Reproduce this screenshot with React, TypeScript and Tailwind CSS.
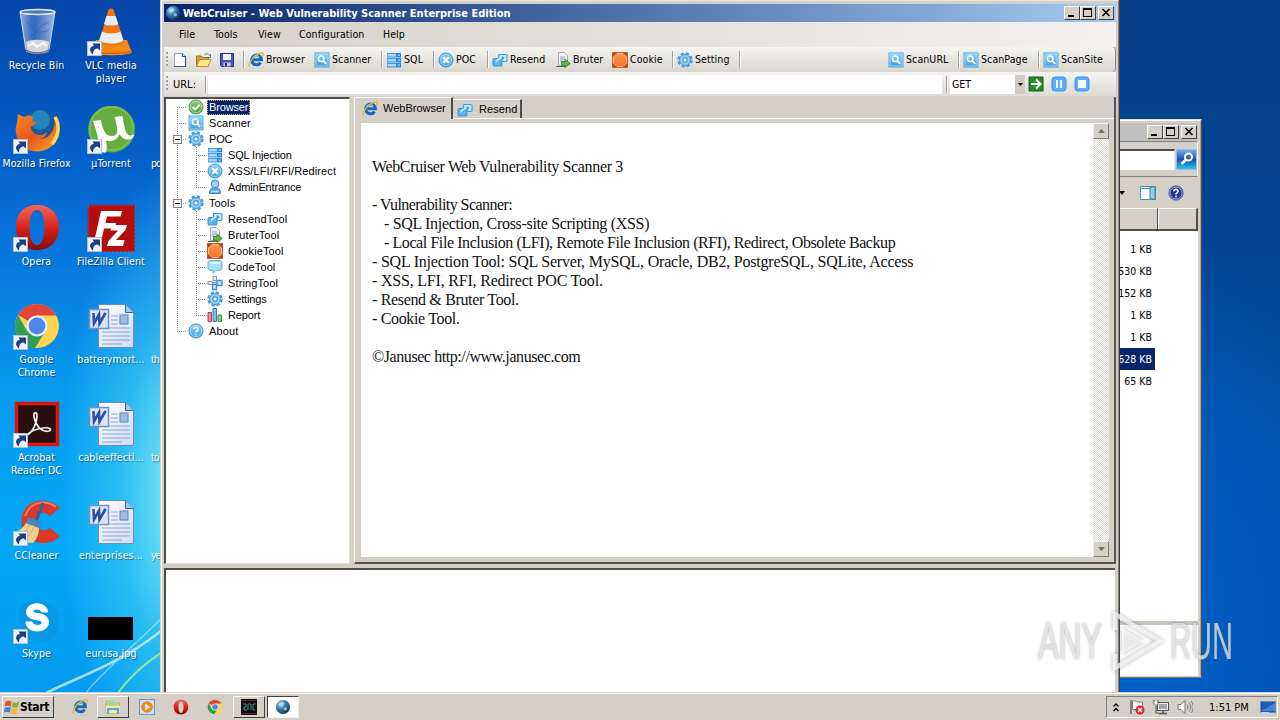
import React from 'react';
import type { ReactNode } from 'react';
import clsx from 'clsx';

/* ---------- shared gradients ---------- */

const Defs = () => (
  <svg className="absolute w-0 h-0" aria-hidden>
    <defs>
      <linearGradient id="blue" x1="0" y1="0" x2="0" y2="1"><stop offset="0" stopColor="#8fd4f7" /><stop offset="1" stopColor="#3d9be0" /></linearGradient>
      <linearGradient id="orange" x1="0" y1="0" x2="0" y2="1"><stop offset="0" stopColor="#ff9a4d" /><stop offset="1" stopColor="#f4702c" /></linearGradient>
      <linearGradient id="red" x1="0" y1="0" x2="0" y2="1"><stop offset="0" stopColor="#f4685a" /><stop offset="0.5" stopColor="#d8231c" /><stop offset="1" stopColor="#8e0806" /></linearGradient>
      <linearGradient id="green" x1="0" y1="0" x2="0" y2="1"><stop offset="0" stopColor="#8fd080" /><stop offset="1" stopColor="#3f9a3c" /></linearGradient>
      <linearGradient id="glass" x1="0" y1="0" x2="1" y2="0"><stop offset="0" stopColor="#b9cbe8" stopOpacity="0.8" /><stop offset="0.4" stopColor="#5d84cb" stopOpacity="0.5" /><stop offset="1" stopColor="#c5d3ec" stopOpacity="0.85" /></linearGradient>
      <linearGradient id="page" x1="0" y1="0" x2="1" y2="1"><stop offset="0" stopColor="#ffffff" /><stop offset="1" stopColor="#cddcf7" /></linearGradient>
      <linearGradient id="fire" x1="0" y1="0" x2="1" y2="1"><stop offset="0" stopColor="#f58a2a" /><stop offset="0.5" stopColor="#e8531c" /><stop offset="1" stopColor="#f7b52b" /></linearGradient>
      <radialGradient id="globe" cx="0.35" cy="0.3" r="0.8"><stop offset="0" stopColor="#b6e0f5" /><stop offset="0.4" stopColor="#3f83b8" /><stop offset="1" stopColor="#0b2746" /></radialGradient>
    </defs>
  </svg>
);

type IconProps = { className?: string };

const Svg = ({ box = 16, className = 'w-4 h-4', children }: { box?: number; className?: string; children: ReactNode }) => (
  <svg viewBox={`0 0 ${box} ${box}`} className={clsx('shrink-0', className)} fill="none">{children}</svg>
);

/* ---------- small 16px icons ---------- */

const IeIcon = ({ className }: IconProps) => (
  <Svg className={className}>
    <path d="M12.600 10.600a4.900 4.900 0 1 1 .8-2.900H4.600" stroke="#1668bf" strokeWidth="3" />
    <path d="M4.500 5.600a4.500 4.500 0 0 1 6.600-.9" stroke="#5fc4f6" strokeWidth="1.400" />
    <path d="M2 13.800C-.6 14 3 6 9 2.600c3.400-1.900 6-2.400 6.200-.9.1.8-.3 1.700-.9 2.600" stroke="#eab52d" strokeWidth="1.400" />
  </Svg>
);

const SearchIcon = ({ className }: IconProps) => (
  <Svg className={className}>
    <rect x="1" y="1" width="14" height="14" fill="url(#blue)" stroke="#4ba3da" />
    <rect x="2" y="2" width="12" height="12" stroke="#c0e8fb" strokeWidth=".7" />
    <circle cx="7.200" cy="6.800" r="2.800" stroke="#fff" strokeWidth="1.400" />
    <path d="m9.400 9 2.800 2.800" stroke="#fff" strokeWidth="1.800" />
  </Svg>
);

const ServerIcon = ({ className }: IconProps) => (
  <Svg className={className}>
    {[1, 6, 11].map((y) => (
      <g key={y}>
        <rect x="1" y={y} width="14" height="4.400" fill="#2488e2" />
        <rect x="1.500" y={y + 0.8} width="8.500" height="2.700" fill="#a9d8f8" />
        <path d={`M11.500 ${y + 2.200}h2.500`} stroke="#7cc0f5" strokeWidth="1.600" />
      </g>
    ))}
  </Svg>
);

const CrossIcon = ({ className }: IconProps) => (
  <Svg className={className}>
    <circle cx="8" cy="8" r="7" fill="url(#blue)" stroke="#3f93d4" />
    <circle cx="8" cy="8" r="5.600" stroke="#a9dcf8" strokeWidth=".8" />
    <path d="m5.300 5.300 5.400 5.400m0-5.400-5.400 5.400" stroke="#fff" strokeWidth="2.200" />
  </Svg>
);

const GearIcon = ({ className }: IconProps) => (
  <Svg className={className}>
    <circle cx="8" cy="8" r="6.500" stroke="#4a9cdb" strokeWidth="2.400" strokeDasharray="3.300 1.800" />
    <circle cx="8" cy="8" r="5.500" fill="#6db8ec" stroke="#4a9cdb" />
    <circle cx="8" cy="8" r="4" stroke="#a9dbf8" strokeWidth="1.200" />
    <circle cx="8" cy="8" r="2.200" fill="#f8fdff" stroke="#3387cc" />
  </Svg>
);

const ResendIcon = ({ className }: IconProps) => (
  <Svg className={className}>
    <rect x="6.500" y="2.500" width="8.500" height="7" rx="1" fill="#c4e7fb" stroke="#3f9fe0" strokeWidth="1.200" />
    <rect x="1" y="6.500" width="9" height="7.500" rx="1" fill="#5db1ec" stroke="#3493da" />
    <path d="M4 10.500c.5-3 3-4 6-4.500" stroke="#d6effc" strokeWidth="1.400" />
    <path d="m9.500 4 3 1.800-2.500 2.700z" fill="#3493da" />
  </Svg>
);

const BruterIcon = ({ className }: IconProps) => (
  <Svg className={className}>
    <path d="M3.500.5h6l3 3v10h-9z" fill="#eef2f8" stroke="#9aa6ba" />
    <path d="M5 5h5M5 7h5M5 9h3" stroke="#8d9cc4" />
    <path d="M1 14.500h9" stroke="#55606a" />
    <path d="M6.500 9.500H10V7.300l5.300 4.200-5.300 4v-2.200H6.500z" fill="#5fb548" stroke="#2f7a25" strokeWidth=".8" />
  </Svg>
);

const CookieIcon = ({ className }: IconProps) => (
  <Svg className={className}>
    <rect x=".5" y=".5" width="15" height="15" fill="#a9481c" stroke="#c65f2d" />
    <path d="m5 1.500 6 0 3.500 3.500v6L11 14.500H5L1.500 11V5z" fill="url(#orange)" stroke="#ffb57c" />
  </Svg>
);

const OkIcon = ({ className }: IconProps) => (
  <Svg className={className}>
    <circle cx="8" cy="8" r="7" fill="url(#green)" stroke="#4f9d48" />
    <circle cx="8" cy="8" r="5.700" stroke="#bfe4b5" strokeWidth=".8" />
    <path d="m4.500 8 2.500 2.500 4.700-4.700" stroke="#fff" strokeWidth="2" />
  </Svg>
);

const UserIcon = ({ className }: IconProps) => (
  <Svg className={className}>
    <path d="M2.500 14.500c0-4 2-6 5.500-6s5.500 2 5.500 6z" fill="#5aaeea" stroke="#2f86cc" />
    <path d="M4.500 12.500h7" stroke="#b7e0fa" strokeWidth="1.500" />
    <circle cx="8" cy="5" r="3.900" fill="#9bd3f6" stroke="#2f86cc" />
  </Svg>
);

const ChatIcon = ({ className }: IconProps) => (
  <Svg className={className}>
    <path d="M3 1.500h10c1.200 0 2 .7 2 2v5.800c0 1.200-.8 2-2 2H9l-3 3v-3H3c-1.200 0-2-.8-2-2V3.500c0-1.300.8-2 2-2z" fill="#a8def6" stroke="#5fb2dc" />
    <path d="M3 4h10" stroke="#dcf4fd" strokeWidth="2" />
  </Svg>
);

const StringIcon = ({ className }: IconProps) => (
  <Svg className={className}>
    <path d="M6 1.500h3.500v4H6zM1 6.500h4.500v3H1z" fill="#e8ebee" stroke="#8a939b" />
    <path d="M5.500 9.500h4v5h-4zM10 5.500h5v5h-5z" fill="#c4e6fa" stroke="#3493d4" strokeWidth="1.300" />
    <path d="M6 7.500h4" stroke="#8a939b" strokeWidth="1.500" />
  </Svg>
);

const ReportIcon = ({ className }: IconProps) => (
  <Svg className={className}>
    <path d="M1 5.500h3.500v9H1z" fill="#ee8191" stroke="#c73e52" />
    <path d="M6 1.500h3.500v13H6z" fill="#79bff0" stroke="#2d7cbc" />
    <path d="M11 8h3.500v6.500H11z" fill="#90cf7a" stroke="#458a36" />
  </Svg>
);

const AboutIcon = ({ className }: IconProps) => (
  <Svg className={className}>
    <circle cx="8" cy="8" r="7" fill="url(#blue)" stroke="#3f93d4" />
    <circle cx="8" cy="8" r="5.700" stroke="#b2e0f9" strokeWidth=".8" />
    <path d="M5.800 6.300C6 3.600 10.200 3.800 10.100 6.200 10 7.600 8 7.700 8 9.500M8 10.700v1.600" stroke="#fff" strokeWidth="1.500" />
  </Svg>
);

const NewIcon = () => (
  <Svg>
    <path d="M2.500 1.500h8l3 3v10h-11z" fill="#fff" stroke="#8ca6d8" />
    <path d="M10.500 1.500v3h3v10h-11" stroke="#2d56a5" strokeWidth="1.200" />
  </Svg>
);

const OpenIcon = () => (
  <Svg className="w-[17px] h-4">
    <path d="M1 14V4h5l1 1.500h6V14z" fill="#d59f2d" stroke="#a87717" />
    <path d="m1 14.500 3-7h11.500l-3 7z" fill="#ffe28c" stroke="#c2912a" />
    <path d="M9 3c2-2 4-1.500 5 .5l1-1v3h-3" stroke="#4c6fa8" />
  </Svg>
);

const SaveIcon = () => (
  <Svg>
    <path d="M1.500 1.500h13v13h-12l-1-1z" fill="#4c55c4" stroke="#262d86" />
    <path d="M4 2h8v6H4z" fill="#f2f4fb" />
    <path d="M4.500 10.500h7v4h-7z" fill="#c8cde0" />
    <path d="M6 11h2v3.500H6z" fill="#262d86" />
  </Svg>
);

const OperaIcon = ({ className }: IconProps) => (
  <Svg className={className}>
    <path fillRule="evenodd" d="M8 .5c4.300 0 7.300 3.100 7.300 7.500s-3 7.500-7.300 7.500S.7 12.400.7 8 3.700.5 8 .5zm0 1.700C6.300 2.200 5.500 4.600 5.500 8s.8 5.900 2.500 5.900 2.500-2.500 2.500-5.900S9.700 2.200 8 2.200z" fill="url(#red)" />
  </Svg>
);

const ChromeIcon = ({ className }: IconProps) => (
  <Svg className={className}>
    <circle cx="8" cy="8" r="7.300" fill="#ffd54f" />
    <path d="M8 8 1.700 4.300A7.300 7.300 0 0 1 14.400 4.500H8z" fill="#e0453a" />
    <path d="M8 8 4.800 9.900 1.700 4.300A7.300 7.300 0 0 0 7.300 15.300L11 9.500z" fill="#2f9e55" />
    <circle cx="8" cy="8" r="3.500" fill="#eef2f6" />
    <circle cx="8" cy="8" r="2.800" fill="#4f86ec" />
  </Svg>
);

const GlobeIcon = ({ className }: IconProps) => (
  <Svg className={className}>
    <circle cx="8" cy="8" r="7" fill="url(#globe)" />
    <path d="M4 5c2-2 4-2 5-1s-1 2-2 3-3 0-3-2zM9 9c2-1 3 0 3 1s-2 2-3 1z" fill="#d7effa" opacity=".6" />
  </Svg>
);

/* ---------- desktop icons (48px box) ---------- */

const ShortcutArrow = () => (
  <g>
    <rect x=".5" y="33.500" width="14" height="14" fill="#eef3f9" stroke="#b4bfcd" />
    <path d="M6 46.500C1.500 43 2.500 38.500 7 38L5.500 35.500h7.500v7l-2.200-2c-3 0-4.800 2-4.800 6z" fill="#1d4085" />
  </g>
);

const BinIcon = () => (
  <Svg box={48} className="w-12 h-12">
    <path d="m7 4 5 36c6 5 18 5 24 0l6-36z" fill="url(#glass)" />
    <path d="M13 34c4-3 18-3 23 0l-1 8c-6 3-15 3-21 0z" fill="#d5d8db" />
    <path d="m15 38 5-3 4 4 6-4 4 3" stroke="#f5f5f5" strokeWidth="2" />
    <path d="m7 4 6 38M42 4l-6 38" stroke="#c7d6ee" />
    <path d="M14 14c7 8 12 13 22 8M17 30c6-6 8-12 19-16" stroke="#2e5caf" opacity=".6" />
    <ellipse cx="24.500" cy="4" rx="17.500" ry="2.500" fill="#4f78c0" stroke="#e4ecf7" strokeWidth="1.300" />
    <path d="M13 43c6 3 17 3 23 0" stroke="#9c8b7e" strokeWidth="1.600" />
  </Svg>
);

const VlcIcon = () => (
  <Svg box={48} className="w-12 h-12">
    <path d="M9 32h31l5 13c-8 3-34 3-42 0z" fill="#f58a17" />
    <path d="M3 43c9 2 33 2 42 0v1.500c-9 2-33 2-42 0z" fill="#cf6608" />
    <path d="M21.500 1.500c1-1.500 4-1.500 5 0L37 34c-3 5-22 5-25 0z" fill="#ef7611" />
    <path d="M19.500 8h9l2.800 8c-3 2-11 2-14.300 0zM15 23.500c4 2.500 14.500 2.500 18.500 0l3 9c-4 4-20 4-24.500 0z" fill="#eceeee" />
    <ShortcutArrow />
  </Svg>
);

const FirefoxIcon = () => (
  <Svg box={48} className="w-12 h-12">
    <circle cx="26" cy="23" r="20" fill="#15599f" />
    <circle cx="27" cy="14" r="10" fill="#2c9cd0" opacity=".65" />
    <path d="M41 9c7 8 7 22-1 30-8 8-22 9-30 1C3 34 1 23 4 17l1-9 6 3c3-2 6-2 9 0l-1 4 5 2-6 4c0 7 9 11 16 5-1 5-5 7-9 7 13 1 19-12 16-24z" fill="url(#fire)" />
    <path d="M42 11c5 8 4 19-3 27" stroke="#ffd94f" strokeWidth="3.500" />
    <ShortcutArrow />
  </Svg>
);

const TorrentIcon = () => (
  <Svg box={48} className="w-12 h-12">
    <circle cx="24.500" cy="23" r="23.500" fill="#66ad3f" />
    <circle cx="24.500" cy="22.500" r="21.500" stroke="#7fc05a" strokeWidth="1.500" />
    <path d="m6 15 8-1c1.500 10 5 17 12 16 6-1 5-7 1.500-19l8-1c2 12 3 17 6 19 2 1 4 .5 6-.5-.5 3-3 5-7 5-3.500 0-6-2-8-5-3 6-8 8-13.500 6 1 5 1 8 0 12-3 0-6-.500-7.500-1C13 34 9 25 6 15z" fill="#fff" />
    <ShortcutArrow />
  </Svg>
);

const FileZillaIcon = () => (
  <Svg box={48} className="w-12 h-12">
    <rect x="2" y="2" width="45" height="45" fill="#b50c0c" stroke="#c40f0f" strokeWidth="3" strokeDasharray="2.500 1.500" />
    <path d="M14 7h21l-1.500 5.500H20L18.500 19H29l-1.500 5.500H17L14 38H7z" fill="#fff" />
    <path d="M25 21h15l-1.500 5L29 36h8.500L36 42H20l1.500-5L31 26.500h-7.500z" fill="#fff" />
    <ShortcutArrow />
  </Svg>
);

const DocIcon = () => (
  <Svg box={48} className="w-12 h-12">
    <path d="M11.500 2.500h27l8 8v35h-35z" fill="url(#page)" stroke="#6b8bc4" />
    <path d="M38.500 2.500v8h8" fill="#a9c0e8" stroke="#3d5f9d" />
    <path d="M24 14h7M24 18h7M24 22h7M15 26h28M15 30h28M15 34h28M15 38h28M15 42h20" stroke="#8ba2cf" strokeWidth="1" />
    <rect x="33" y="13" width="8" height="9" fill="#9ebbe6" stroke="#5f83bf" />
    <rect x="2.500" y="7.500" width="19" height="19" fill="#dbe6fa" stroke="#6f91cc" strokeWidth="1.500" />
    <path d="m6.500 11 .5 10.500 5-9 .5 9 6-10.500" stroke="#2c4fa3" strokeWidth="2.600" />
  </Svg>
);

const AcrobatIcon = () => (
  <Svg box={48} className="w-12 h-12">
    <rect x="3.500" y="3.500" width="41" height="41" fill="#2a0e10" stroke="#d8180f" strokeWidth="3.500" />
    <path d="M13 36c7-4 11-13 11-20 0-5-4-4-3 1 2 9 8 16 15 14 4-1.500 0-4-6-3-6 .8-12 3-16.500 7" stroke="#f4f1f0" strokeWidth="1.700" />
    <ShortcutArrow />
  </Svg>
);

const CCleanerIcon = () => (
  <Svg box={48} className="w-12 h-12">
    <path d="M47 10C36-1 13 0 9 18c-3 15 8 27 21 27 7 0 12-2 17-7l-10-8c-6 5-14 1-14-7 0-8 8-11 14-5z" fill="#d9382a" />
    <path d="M12 18C17 4 32 1 43 9" stroke="#ee7a61" strokeWidth="2" />
    <path d="m30 5-7 19" stroke="#2d6898" strokeWidth="3" />
    <path d="m15 19 14 5-2 6-14-5z" fill="#3f88bd" />
    <path d="M13 25c-3 5-7 8-12 10 5 7 12 10 19 10 4-4 6-9 6-15z" fill="#f1cf92" />
    <path d="M6 37c5-2 8-5 11-10m-5 14c4-3 7-7 9-12" stroke="#d3a45c" />
    <ShortcutArrow />
  </Svg>
);

const SkypeIcon = () => (
  <Svg box={48} className="w-12 h-12">
    <path d="M13 5c5-3 14-2 18 1 9 1 13 8 14 16 2 6 0 21-8 22-8 2-20 2-24-4C4 30 3 12 13 5z" fill="#0793df" opacity=".65" />
    <path d="M34.500 16c0-11-21-11-21 0 0 10 15.500 6 15.500 10.500 0 4-9 4-10-.5h-6c0 12 22.500 12 22.500 0 0-10.500-15.500-7-15.500-10.500 0-3.500 8-3 8.500.5z" fill="#fff" stroke="#fff" />
    <ShortcutArrow />
  </Svg>
);

const BlackThumb = () => (
  <Svg box={48} className="w-12 h-12"><path d="M1 21h45v23H1z" fill="#000" /></Svg>
);

const BigOpera = () => (
  <Svg box={48} className="w-12 h-12">
    <path fillRule="evenodd" d="M24 1c13 0 22 8 22 22s-9 23-22 23S3 37 3 23 11 1 24 1zm0 5c-5 0-7.500 7-7.500 17S19 41 24 41s7.500-8 7.500-18S29 6 24 6z" fill="url(#red)" />
    <ShortcutArrow />
  </Svg>
);

const BigChrome = () => (
  <div className="relative w-12 h-12">
    <ChromeIcon className="w-12 h-12" />
    <svg viewBox="0 0 48 48" className="absolute inset-0 w-12 h-12" fill="none"><ShortcutArrow /></svg>
  </div>
);

/* ---------- desktop ---------- */

const desktopRows: { icon: ReactNode; label: string[] }[][] = [
  [{ icon: <BinIcon />, label: ['Recycle Bin'] }, { icon: <VlcIcon />, label: ['VLC media', 'player'] }],
  [{ icon: <FirefoxIcon />, label: ['Mozilla Firefox'] }, { icon: <TorrentIcon />, label: ['µTorrent'] }, { icon: null, label: ['po'] }],
  [{ icon: <BigOpera />, label: ['Opera'] }, { icon: <FileZillaIcon />, label: ['FileZilla Client'] }],
  [{ icon: <BigChrome />, label: ['Google', 'Chrome'] }, { icon: <DocIcon />, label: ['batterymort...'] }, { icon: null, label: ['th'] }],
  [{ icon: <AcrobatIcon />, label: ['Acrobat', 'Reader DC'] }, { icon: <DocIcon />, label: ['cableeffecti...'] }, { icon: null, label: ['to'] }],
  [{ icon: <CCleanerIcon />, label: ['CCleaner'] }, { icon: <DocIcon />, label: ['enterprises...'] }, { icon: null, label: ['ye'] }],
  [{ icon: <SkypeIcon />, label: ['Skype'] }, { icon: <BlackThumb />, label: ['eurusa.jpg'] }],
];

const Desktop = () => (
  <div className="w-[161px] h-[692px] overflow-hidden pt-2 text-white tracking-[0.1px] [text-shadow:1px_1px_1px_rgba(0,0,0,0.45)]">
    {desktopRows.map((row, i) => (
      <div key={i} className="flex h-[98px] w-[260px]">
        {row.map((item, j) => (
          <div key={j} className={clsx('shrink-0 flex flex-col', j === 0 ? 'w-[73px]' : 'w-[76px]', j < 2 ? 'items-center' : 'items-start pl-[2px]')}>
            <div className="h-12">{item.icon}</div>
            <div className={clsx('pt-[3px] text-center leading-[13px] whitespace-nowrap', j === 2 && 'tracking-[-1px]')}>
              {item.label.map((line) => <div key={line}>{line}</div>)}
            </div>
          </div>
        ))}
      </div>
    ))}
  </div>
);

/* ---------- window chrome ---------- */

const CaptionButton = ({ kind }: { kind: 'min' | 'max' | 'close' }) => (
  <button className={clsx('w-4 h-[14px] bg-[#d4d0c8] border border-t-white border-l-white border-r-[#404040] border-b-[#404040]', kind === 'close' && 'ml-[2px]')}>
    <svg viewBox="0 0 14 12" className="w-[14px] h-3" fill="none" stroke="#000" shapeRendering="crispEdges">
      {kind === 'min' && <path d="M3 9h6" strokeWidth="2" />}
      {kind === 'max' && <path d="M2.500 1.500h8v8h-8zM2 2.500h9" />}
      {kind === 'close' && <path d="m3.500 2 7 7m0-7-7 7" strokeWidth="1.600" shapeRendering="auto" />}
    </svg>
  </button>
);

const CaptionButtons = () => (
  <div className="flex">
    <CaptionButton kind="min" />
    <CaptionButton kind="max" />
    <CaptionButton kind="close" />
  </div>
);

const Grip = () => (
  <svg className="w-[3px] h-[16px] shrink-0" viewBox="0 0 3 16">
    {[0, 4, 8, 12].map((y) => <rect key={y} x="0" y={y} width="2" height="2" fill="#a5a199" />)}
  </svg>
);

const Sep = ({ className }: IconProps) => <div className={clsx('w-[2px] h-[17px] shrink-0 border-l border-[#a6a39c] bg-white', className)} />;

const ToolButton = ({ icon, label, className }: { icon: ReactNode; label: string; className: string }) => (
  <div className={clsx('flex shrink-0 items-center gap-[2px] whitespace-nowrap', className)}>
    {icon}
    <span>{label}</span>
  </div>
);

const MenuBar = () => (
  <div className="flex h-[25px] items-center bg-linear-to-r from-[#d4d0c8] to-[#f3f2ef] pl-[15px] tracking-[0.1px]">
    <span className="w-[35px]">File</span>
    <span className="w-[44px]">Tools</span>
    <span className="w-[41px]">View</span>
    <span className="w-[84px]">Configuration</span>
    <span>Help</span>
  </div>
);

const Toolbar = () => (
  <div className="flex h-[25px] items-center rounded-r bg-linear-to-b from-[#f5f4f1] to-[#d9d5ce] pl-[2px] border-r border-[#8d8a84] tracking-[0.1px]">
    <Grip />
    <div className="ml-[3px] flex w-[69px] gap-[7px]"><NewIcon /><OpenIcon /><SaveIcon /></div>
    <Sep className="ml-[2px]" />
    <ToolButton className="ml-[3px] w-[66px]" icon={<IeIcon />} label="Browser" />
    <ToolButton className="w-[67px]" icon={<SearchIcon />} label="Scanner" />
    <Sep /><ToolButton className="ml-[3px] w-[47px]" icon={<ServerIcon />} label="SQL" />
    <Sep /><ToolButton className="ml-[3px] w-[49px]" icon={<CrossIcon />} label="POC" />
    <Sep /><ToolButton className="ml-[3px] w-[63px]" icon={<ResendIcon />} label="Resend" />
    <ToolButton className="w-[57px]" icon={<BruterIcon />} label="Bruter" />
    <ToolButton className="w-[60px]" icon={<CookieIcon />} label="Cookie" />
    <Sep /><ToolButton className="ml-[3px] w-[62px]" icon={<GearIcon />} label="Setting" />
    <Sep />
    <ToolButton className="ml-auto w-[70px]" icon={<SearchIcon />} label="ScanURL" />
    <Sep /><ToolButton className="ml-[3px] w-[75px]" icon={<SearchIcon />} label="ScanPage" />
    <Sep /><ToolButton className="ml-[3px] w-[72px]" icon={<SearchIcon />} label="ScanSite" />
  </div>
);

const UrlBar = () => (
  <div className="flex h-[24px] items-center bg-linear-to-b from-[#f5f4f1] to-[#dedad4] pl-[2px]">
    <Grip />
    <span className="ml-1 w-[32px] text-[11px]">URL:</span>
    <Sep />
    <div className="ml-[1px] w-[734px] h-[19px] bg-white" />
    <Sep className="ml-[4px]" />
    <div className="ml-[2px] flex h-[19px] w-[75px] items-center bg-white pl-[2px]">
      <span className="flex-1">GET</span>
      <div className="flex h-full w-[10px] items-center justify-center bg-[#cfcbc4]">
        <svg viewBox="0 0 5 3" className="w-[5px] h-[3px]"><path d="M0 0h5L2.500 3z" /></svg>
      </div>
    </div>
    <div className="ml-[3px] flex gap-[7px]">
      <Svg>
        <rect x="1" y="1" width="14" height="14" fill="#2b8a2b" stroke="#156015" />
        <path d="M3 8h9M8 3.500 12.500 8 8 12.500" stroke="#fff" strokeWidth="2" />
      </Svg>
      <Svg>
        <rect x="1" y="1" width="14" height="14" rx="3" fill="#5cb0fb" stroke="#3b91e8" />
        <path d="M6 4v8m4-8v8" stroke="#fff" strokeWidth="1.800" />
      </Svg>
      <Svg>
        <rect x="1" y="1" width="14" height="14" rx="3" fill="#5cb0fb" stroke="#3b91e8" />
        <rect x="4" y="4" width="8" height="8" fill="#fff" />
      </Svg>
    </div>
  </div>
);

/* ---------- tree ---------- */

type GuideProps = { up?: boolean; down?: boolean; right?: boolean; box?: boolean };

const Guide = ({ up, down, right, box }: GuideProps) => (
  <svg viewBox="0 0 19 16" className="w-[19px] h-4 shrink-0" fill="none" stroke="#8c8c8c" shapeRendering="crispEdges">
    <g strokeDasharray="1 1">
      {up && <path d="M9.500 0v8" />}
      {down && <path d="M9.500 8v8" />}
      {right && <path d="M9 8.500h10" />}
    </g>
    {box && (
      <>
        <rect x="5.500" y="4.500" width="8" height="8" fill="#fff" stroke="#808080" />
        <path d="M7 8.500h5" stroke="#000" />
      </>
    )}
  </svg>
);

const tree: { label: string; icon: ReactNode; guides: GuideProps[]; selected?: boolean; tight?: boolean }[] = [
  { label: 'Browser', icon: <OkIcon />, guides: [{ down: true, right: true }], selected: true, tight: true },
  { label: 'Scanner', icon: <SearchIcon />, guides: [{ up: true, down: true, right: true }] },
  { label: 'POC', icon: <GearIcon />, guides: [{ up: true, down: true, right: true, box: true }], tight: true },
  { label: 'SQL Injection', icon: <ServerIcon />, guides: [{ up: true, down: true }, { up: true, down: true, right: true }], tight: true },
  { label: 'XSS/LFI/RFI/Redirect', icon: <CrossIcon />, guides: [{ up: true, down: true }, { up: true, down: true, right: true }] },
  { label: 'AdminEntrance', icon: <UserIcon />, guides: [{ up: true, down: true }, { up: true, right: true }], tight: true },
  { label: 'Tools', icon: <GearIcon />, guides: [{ up: true, down: true, right: true, box: true }] },
  { label: 'ResendTool', icon: <ResendIcon />, guides: [{ up: true, down: true }, { up: true, down: true, right: true }] },
  { label: 'BruterTool', icon: <BruterIcon />, guides: [{ up: true, down: true }, { up: true, down: true, right: true }] },
  { label: 'CookieTool', icon: <CookieIcon />, guides: [{ up: true, down: true }, { up: true, down: true, right: true }] },
  { label: 'CodeTool', icon: <ChatIcon />, guides: [{ up: true, down: true }, { up: true, down: true, right: true }] },
  { label: 'StringTool', icon: <StringIcon />, guides: [{ up: true, down: true }, { up: true, down: true, right: true }] },
  { label: 'Settings', icon: <GearIcon />, guides: [{ up: true, down: true }, { up: true, down: true, right: true }], tight: true },
  { label: 'Report', icon: <ReportIcon />, guides: [{ up: true, down: true }, { up: true, right: true }], tight: true },
  { label: 'About', icon: <AboutIcon />, guides: [{ up: true, right: true }] },
];

const Tree = () => (
  <div className="w-[186px] shrink-0 bg-white border-t-2 border-l-2 border-[#504d49] border-r border-r-[#e4e1dc] border-b border-b-[#e4e1dc] pl-[2px] font-['Liberation_Sans',sans-serif] text-[11px]">
    {tree.map((node) => (
      <div key={node.label} className="flex h-4 items-center whitespace-nowrap">
        {node.guides.map((g, i) => <Guide key={i} {...g} />)}
        <span className="ml-[1px]">{node.icon}</span>
        <span
          className={clsx(
            'ml-[3px] h-[15px] pl-[2px] leading-[15px]',
            node.tight ? 'tracking-[-0.15px]' : 'tracking-[0.12px]',
            node.selected && 'pr-[2px] bg-[#0a246a] text-white outline-1 -outline-offset-1 outline-dotted outline-[#d8b86a]',
          )}
        >
          {node.label}
        </span>
      </div>
    ))}
  </div>
);

/* ---------- browser panel ---------- */

const lines: { text: string; className?: string }[] = [
  { text: 'WebCruiser Web Vulnerability Scanner 3', className: 'tracking-[-0.35px]' },
  { text: '' },
  { text: '- Vulnerability Scanner:', className: 'tracking-[-0.55px]' },
  { text: '- SQL Injection, Cross-site Scripting (XSS)', className: 'pl-3 tracking-[-0.31px]' },
  { text: '- Local File Inclusion (LFI), Remote File Inclusion (RFI), Redirect, Obsolete Backup', className: 'pl-3 tracking-[-0.42px]' },
  { text: '- SQL Injection Tool: SQL Server, MySQL, Oracle, DB2, PostgreSQL, SQLite, Access', className: 'tracking-[-0.21px]' },
  { text: '- XSS, LFI, RFI, Redirect POC Tool.', className: 'tracking-[-0.2px]' },
  { text: '- Resend & Bruter Tool.', className: 'tracking-[-0.34px]' },
  { text: '- Cookie Tool.', className: 'tracking-[-0.34px]' },
  { text: '' },
  { text: '©Janusec http://www.janusec.com', className: 'tracking-[-0.42px]' },
];

const ScrollButton = ({ d }: { d: string }) => (
  <div className="flex h-4 w-4 items-center justify-center bg-[#d4d0c8] border border-t-[#f4f2ee] border-l-[#f4f2ee] border-r-[#807d77] border-b-[#807d77]">
    <svg viewBox="0 0 7 4" className="w-[7px] h-1"><path d={d} fill="#77746f" /></svg>
  </div>
);

const BrowserPanel = () => (
  <div className="flex min-w-0 flex-1 flex-col border-r-2 border-b-2 border-r-[#57534f] border-b-[#57534f] border-l border-l-white">
    <div className="flex h-[22px] shrink-0 items-end">
      <div className="flex h-[22px] w-[98px] shrink-0 items-center gap-[5px] border-t border-t-white border-r-2 border-r-[#504d49] pl-[7px]">
        <IeIcon />
        <span className="font-['Liberation_Sans',sans-serif] text-[11px]">WebBrowser</span>
      </div>
      <div className="flex h-[20px] flex-1 border-b border-b-white">
        <div className="flex h-[19px] w-[69px] items-center gap-[6px] border-t border-t-white border-r-2 border-r-[#504d49] pt-[1px] pl-[4px]">
          <ResendIcon />
          <span className="font-['Liberation_Sans',sans-serif] text-[11px] tracking-[0.1px]">Resend</span>
        </div>
      </div>
    </div>
    <div className="mt-1 mr-[5px] mb-[5px] ml-[6px] flex flex-1 bg-white">
      <div className="flex-1 pt-[34px] pl-[11px] font-['Liberation_Serif',serif] text-[16px] leading-[19px] whitespace-nowrap text-[#111]">
        {lines.map((line, i) => <div key={i} className={clsx('h-[19px]', line.className)}>{line.text}</div>)}
      </div>
      <div className="flex w-4 flex-col justify-between bg-[repeating-conic-gradient(#dcd9d3_0_25%,#ffffff_0_50%)] bg-[length:2px_2px]">
        <ScrollButton d="M0 4h7L3.500 0z" />
        <ScrollButton d="M0 0h7L3.500 4z" />
      </div>
    </div>
  </div>
);

const MainWindow = () => (
  <div className="absolute left-[160px] top-0 flex h-[692px] w-[960px] flex-col bg-[#d4d0c8] border-l border-l-[#d4d0c8] border-r border-r-[#404040]">
    <div className="flex flex-1 flex-col border-l border-l-white border-r border-r-[#808080] border-t border-t-[#e8e6e1] pl-[2px] pr-[2px] pt-[3px]">
      <div className="flex h-[18px] shrink-0 items-center bg-linear-to-r from-[#0a246a] to-[#a6caf0] pl-[1px] pr-[2px] text-[11px] font-bold text-white">
        <GlobeIcon />
        <span className="ml-[2px] flex-1">WebCruiser - Web Vulnerability Scanner Enterprise Edition</span>
        <CaptionButtons />
      </div>
      <MenuBar />
      <Toolbar />
      <UrlBar />
      <div className="mt-[1px] flex h-[467px] gap-[4px]">
        <Tree />
        <BrowserPanel />
      </div>
      <div className="mt-[4px] mr-[1px] flex-1 bg-white border-t-2 border-l-2 border-[#504d49]" />
    </div>
  </div>
);

/* ---------- explorer window behind ---------- */

const sizes = ['1 KB', '1,530 KB', '1,152 KB', '1 KB', '1 KB', '1,628 KB', '65 KB'];

const ExplorerWindow = () => (
  <div className="absolute left-[1000px] top-[119px] flex h-[559px] w-[202px] flex-col bg-[#d4d0c8] border-t border-t-[#e4e1dc] border-r border-r-[#55524d] border-b border-b-[#77746d] pl-[100px]">
    <div className="flex flex-1 flex-col border-t border-t-white border-r border-r-[#aaa69e] border-b border-b-[#d4d0c8] pt-[2px] pr-[2px]">
      <div className="flex h-[18px] items-center justify-end bg-[#c0c0c0] pr-[1px]"><CaptionButtons /></div>
      <div className="flex h-[36px] items-center justify-end border-t border-t-[#808080] border-r border-r-white border-b border-b-[#808080]">
        <div className="h-[21px] w-[75px] bg-white border-t-2 border-t-[#504d49] border-r border-r-[#e8e6e1]" />
        <div className="ml-[1px] flex h-[21px] w-[21px] items-center justify-center border border-[#9bb8dd] bg-linear-to-b from-[#79a9e8] via-[#1d4cb4] to-[#27c7e8]">
          <Svg>
            <circle cx="9.500" cy="6" r="3.500" stroke="#fff" strokeWidth="2" />
            <path d="m7 8.500-4.500 4.500" stroke="#fff" strokeWidth="2.500" />
          </Svg>
        </div>
      </div>
      <div className="flex h-[31px] items-center justify-end pr-[14px]">
        <svg viewBox="0 0 6 4" className="w-[6px] h-1"><path d="M0 0h6L3 4z" /></svg>
        <Svg className="ml-[15px] w-4 h-4">
          <rect x=".5" y="1.500" width="15" height="13" fill="#fff" stroke="#4e97ad" />
          <path d="M1 3.500h9" stroke="#3a9ab2" />
          <rect x="10" y="2" width="5" height="12" fill="#8fd0e2" stroke="#3f8399" />
        </Svg>
        <Svg className="ml-[12px] w-4 h-4">
          <circle cx="8" cy="8" r="7.300" fill="#26349a" stroke="#7b86bd" />
          <circle cx="8" cy="8" r="6" stroke="#9eaee8" />
          <path d="M5.800 6.300C6 3.600 10.200 3.800 10.100 6.200 10 7.600 8 7.700 8 9.500M8 10.700v1.600" stroke="#fff" strokeWidth="1.600" />
        </Svg>
      </div>
      <div className="flex h-[23px] justify-end border-b-2 border-b-[#504d49]">
        <div className="w-[58px] border-t border-t-white border-r border-r-[#504d49]" />
        <div className="w-[40px] border-t border-t-white border-l border-l-white border-r-2 border-r-[#504d49]" />
      </div>
      <div className="flex h-[390px] flex-col bg-white pt-[7px]">
        {sizes.map((size, i) => (
          <div key={i} className={clsx('mr-[43px] flex h-[22px] items-center justify-end pr-[3px]', i === 5 && 'bg-[#0a246a] text-white')}>{size}</div>
        ))}
      </div>
      <div className="h-[4px] bg-[#c8c5be]" />
      <div className="flex-1 bg-white" />
    </div>
  </div>
);

/* ---------- taskbar ---------- */

const StartButton = () => (
  <button className="flex h-[22px] w-[52px] items-center bg-[#d4d0c8] border border-t-white border-l-white border-r-[#404040] border-b-[#404040] pl-[1px] font-bold">
    <Svg>
      <path d="M1.500 2.500c2-1 4-1 6 0L6.600 7.500c-2-1-4-1-6 0z" fill="#e8502d" />
      <path d="M8.500 3c2 1 4 1 7-.2L14 8c-2 1-4 1-6.200 0z" fill="#7cb83c" />
      <path d="M.8 8.700c2-1 4-1 6 0l-1 5c-2-1-4-1-6 0z" fill="#3f87dc" />
      <path d="M7.800 9.200c2 1 4 1 6 0l-1 5c-2 1-4 1-6 0z" fill="#f2bb2b" />
    </Svg>
    <span className="text-[12px] tracking-[-0.3px]">Start</span>
  </button>
);

const Tray = () => (
  <div className="ml-auto mr-[2px] flex h-[22px] w-[172px] items-center border border-t-[#808080] border-l-[#808080] border-r-white border-b-white">
    <svg viewBox="0 0 6 9" className="ml-[6px] w-[6px] h-[9px]" fill="none" stroke="#000" strokeWidth="1.300"><path d="m.5 3.500 2.500-2.500 2.500 2.500M.5 8 3 5.500 5.500 8" /></svg>
    <Svg className="ml-[10px] w-4 h-4">
      <path d="M2 1v14" stroke="#6a6a6a" strokeWidth="1.500" />
      <path d="M3.500 2c3-1 4 2 10 1v8c-5 1-6-1-10-.5z" fill="#fafafa" stroke="#7a7a7a" />
      <circle cx="11" cy="11" r="4.500" fill="#d8212a" />
      <path d="m9 9 4 4m0-4-4 4" stroke="#fff" strokeWidth="1.400" />
    </Svg>
    <Svg className="ml-[8px] w-4 h-4">
      <rect x="4.500" y="3.500" width="11" height="8" fill="#9ca3a6" stroke="#555" />
      <rect x="5.500" y="4.500" width="9" height="6" stroke="#f4f4f4" />
      <path d="M10 12v2m-4 .5h8" stroke="#555" strokeWidth="1.500" />
      <path d="M1 1v4h4V1M3 5v9h3" stroke="#666" strokeWidth="1.200" />
      <rect x="1.500" y="2.500" width="3" height="3" fill="#fff" />
    </Svg>
    <Svg className="ml-[8px] w-4 h-4">
      <path d="M1 5.500h3l4-4v13l-4-4H1z" fill="#f2f2f2" stroke="#777" />
      <path d="M10 5.500c1.300 1.500 1.300 3.500 0 5M12 3.500c2.500 2.500 2.500 6.500 0 9M14 2c3 3.500 3 8.500 0 12" stroke="#777" />
    </Svg>
    <span className="ml-[16px] w-[49px] text-[11px]">1:51 PM</span>
    <Svg className="ml-[2px] w-4 h-4">
      <rect x=".5" y="2.500" width="15" height="11" fill="#2159b6" stroke="#6f87a9" />
      <path d="M1 12 15 4v8z" fill="#4583db" />
      <path d="M1 13.500h8" stroke="#a9e2f4" />
    </Svg>
  </div>
);

const Taskbar = () => (
  <div className="relative flex h-[28px] w-full items-center border-t border-t-[#d4d0c8] bg-[#d4d0c8]">
    <div className="flex h-full w-full items-center border-t border-t-white pl-[2px]">
      <StartButton />
      <IeIcon className="ml-[18px] w-4 h-4" />
      <div className="ml-[9px] flex h-[22px] w-[32px] items-center justify-center border border-t-white border-l-white border-r-[#404040] border-b-[#404040]">
        <Svg>
          <path d="M1 2.500h5l1 1.500h7.500v10H1z" fill="#ecd27a" stroke="#c7a348" />
          <path d="M3 1.500h5v2h5v3H3z" fill="#9ed3a2" />
          <path d="M1 7h14v7H1z" fill="#f8e7a3" />
          <path d="M3 14.500V10h10v4.500" stroke="#58a8d8" strokeWidth="2.200" />
        </Svg>
      </div>
      <Svg className="ml-[10px] w-4 h-4">
        <rect x=".5" y=".5" width="15" height="15" fill="#c7dff2" stroke="#6c99c8" />
        <circle cx="8" cy="8" r="5.800" fill="#f28a1c" />
        <path d="m6.300 4.700 5 3.300-5 3.300z" fill="#fff" />
      </Svg>
      <OperaIcon className="ml-[18px] w-4 h-4" />
      <ChromeIcon className="ml-[18px] w-4 h-4" />
      <div className="ml-[10px] flex h-[22px] w-[32px] items-center justify-center border border-t-white border-l-white border-r-[#404040] border-b-[#404040]">
        <Svg>
          <rect width="16" height="16" fill="#0c0c10" />
          <path d="M2 5h3v3H3v3h3M7 11V5h3v6M12 5v6h2M12 5h3" stroke="#3f9090" />
          <path d="M0 1.500h16M0 14.500h16" stroke="#7a1d1d" />
        </Svg>
      </div>
      <div className="ml-[2px] flex h-[22px] w-[32px] items-center justify-center bg-white border border-t-[#404040] border-l-[#404040] border-r-[#f4f2ee] border-b-[#f4f2ee]">
        <GlobeIcon />
      </div>
      <Tray />
    </div>
  </div>
);

const Watermark = () => (
  <div className="absolute left-[1038px] top-[608px] flex h-[66px] w-[194px] items-center justify-between font-['Liberation_Sans',sans-serif] text-[52px] leading-none text-white/65 [text-shadow:0_0_3px_rgba(90,90,90,0.6)]">
    <div className="w-[64px]"><span className="inline-block origin-left scale-x-[0.6]">ANY</span></div>
    <svg viewBox="0 0 60 66" className="w-[60px] h-[66px] shrink-0 drop-shadow-[0_0_2px_rgba(90,90,90,0.65)]" fill="none">
      <path d="M9 22V6l45 27-45 27V46" stroke="#fff" strokeOpacity=".7" strokeWidth="4.500" />
      <path d="M16 20v26l22-13z" fill="#fff" fillOpacity=".7" />
    </svg>
    <div className="w-[62px]"><span className="inline-block origin-left scale-x-[0.56]">RUN</span></div>
  </div>
);

const Wallpaper = () => (
  <>
    <div className="absolute left-0 top-0 h-[692px] w-[161px] bg-[radial-gradient(ellipse_130px_330px_at_190px_490px,rgba(165,250,245,0.9),rgba(80,220,245,0.45)_55%,transparent),linear-gradient(to_bottom,#0646a8_0,#0556bf_110px,#0871da_230px,#079aee_390px,#04a8f6_540px,#049af0_692px)]" />
    <div className="absolute left-[1119px] top-0 h-[692px] w-[161px] bg-[radial-gradient(ellipse_260px_400px_at_0_620px,#0062cc,transparent),linear-gradient(to_bottom,#064088_0,#04438f_200px,#0250a8_450px,#0052b0_692px)]" />
    <svg viewBox="0 0 160 100" className="absolute left-0 top-[592px] w-[160px] h-[100px]" fill="none">
      <path d="M46 101C80 84 120 72 162 38" stroke="#d5f7fc" strokeWidth="2.500" opacity=".75" />
      <path d="M86 101C100 82 125 62 162 26" stroke="#b5f0fb" strokeWidth="1.500" opacity=".6" />
      <path d="M118 101C130 84 142 74 162 60" stroke="#9ff28c" strokeWidth="2" opacity=".9" />
    </svg>
  </>
);

const App = () => {
  return (
    <div className="relative flex h-[720px] w-[1280px] flex-col overflow-hidden bg-[#0a55b8] font-['DejaVu_Sans_Condensed','Noto_Sans',sans-serif] text-[10.5px] leading-[13px] text-black">
      <Defs />
      <Wallpaper />
      <div className="relative h-[692px]">
        <Desktop />
        <ExplorerWindow />
        <MainWindow />
      </div>
      <Taskbar />
      <Watermark />
    </div>
  );
};

export default App;
